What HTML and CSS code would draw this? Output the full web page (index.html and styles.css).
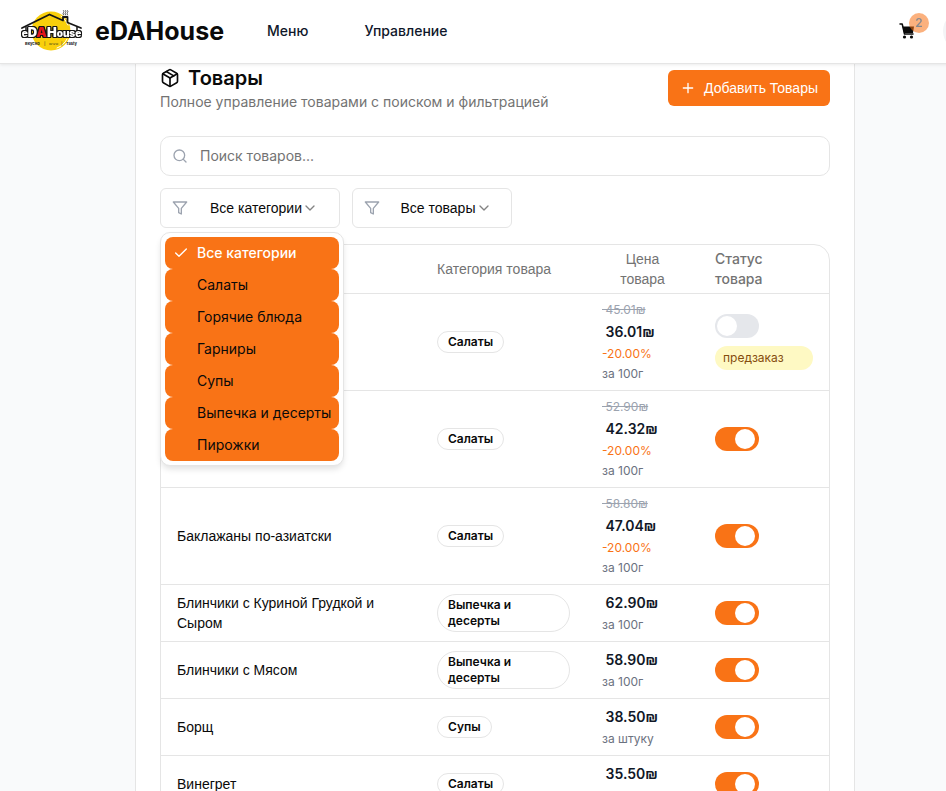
FILE: index.html
```html
<!DOCTYPE html>
<html lang="ru">
<head>
<meta charset="utf-8">
<meta name="viewport" content="width=device-width, initial-scale=1">
<title>eDAHouse</title>
<link rel="stylesheet" href="styles.css">
</head>
<body>
<div class="page">
  <header class="topbar">
    <a class="brand" href="#">
      <svg class="brand-logo" viewBox="0 0 64 44" aria-hidden="true">
        <circle cx="31" cy="22" r="19.500" fill="#f9cf0c"/>
        <path d="M41 7a18 18 0 0 1 7 9M47 30a18 18 0 0 1-10 9" fill="none" stroke="#fff" stroke-width="1"/>
        <path d="M2 19 29.500 5.500 43 11.500V8h4.500v5.500L61 19" fill="none" stroke="#161616" stroke-width="1.800"/>
        <path d="M6 18v3M57 18v3" stroke="#161616" stroke-width="1.500"/>
        <path d="M43.500 6q-1-1.500 0-2.500t0-2M45.500 6q-1-1.500 0-2.500t0-2M47.500 6q-1-1.500 0-2.500t0-2" fill="none" stroke="#333" stroke-width=".8"/>
        <text class="logo-word" text-anchor="middle" x="31.500" y="28" fill="#fff"><tspan class="logo-small">e</tspan>D<tspan fill="#e3151b">A</tspan>H<tspan class="logo-small">ouse</tspan></text>
        <g class="logo-tag" fill="#222">
          <text x="5" y="35.500">Вкусно</text>
          <text x="24" y="35.500" fill="#7c6b18">|</text>
          <text x="29" y="35.500" fill="#7c6b18">טעים</text>
          <text x="41" y="35.500" fill="#7c6b18">|</text>
          <text x="46" y="35.500">Tasty</text>
        </g>
      </svg>
      <span class="brand-name">eDAHouse</span>
    </a>
    <nav class="nav">
      <a href="#">Меню</a>
      <a href="#">Управление</a>
    </nav>
    <div class="account">
      <button class="cart" type="button" aria-label="Корзина">
        <svg viewBox="0 0 16 18" aria-hidden="true">
          <path d="M1 2h2.200l2.300 10H14" fill="none" stroke="#0a0a0a" stroke-width="1.500"/>
          <path d="M3.500 4.500H15l-1 6.500H5z" fill="#0a0a0a"/>
          <circle cx="5.500" cy="15" r="1.600" fill="#0a0a0a"/>
          <circle cx="12.500" cy="15" r="1.600" fill="#0a0a0a"/>
        </svg>
        <span class="cart-count">2</span>
      </button>
      <button class="avatar" type="button" aria-label="Профиль"></button>
    </div>
  </header>

  <main class="panel">
    <div class="panel-head">
      <div>
        <h1>
          <svg class="icon-box" viewBox="0 0 24 24" aria-hidden="true"><path d="M11 21.730a2 2 0 0 0 2 0l7-4A2 2 0 0 0 21 16V8a2 2 0 0 0-1-1.730l-7-4a2 2 0 0 0-2 0l-7 4A2 2 0 0 0 3 8v8a2 2 0 0 0 1 1.730z"/><path d="M12 22V12"/><path d="m3.300 7 8.700 5 8.700-5"/><path d="m7.500 4.270 9 5.150"/></svg>
          Товары
        </h1>
        <p>Полное управление товарами с поиском и фильтрацией</p>
      </div>
      <button class="add" type="button">
        <svg viewBox="0 0 24 24" aria-hidden="true"><path d="M5 12h14M12 5v14"/></svg>
        Добавить Товары
      </button>
    </div>

    <label class="search">
      <svg viewBox="0 0 24 24" aria-hidden="true"><circle cx="11" cy="11" r="8"/><path d="m21 21-4.300-4.300"/></svg>
      <input type="search" placeholder="Поиск товаров..." aria-label="Поиск товаров">
    </label>

    <div class="filters">
      <div class="filter filter-category">
        <svg class="funnel" viewBox="0 0 24 24" aria-hidden="true"><path d="M22 3H2l8 9.460V19l4 2v-8.540z"/></svg>
        <div class="filter-value">
          <select aria-label="Категория">
            <option>Все категории</option>
          </select>
          <svg class="chevron" viewBox="0 0 24 24" aria-hidden="true"><path d="m6 9 6 6 6-6"/></svg>
        </div>
        <ul class="menu" role="listbox" aria-label="Категория">
          <li class="selected" role="option" aria-selected="true">
            <svg viewBox="0 0 24 24" aria-hidden="true"><path d="M20 6 9 17l-5-5"/></svg>
            Все категории
          </li>
          <li role="option">Салаты</li>
          <li role="option">Горячие блюда</li>
          <li role="option">Гарниры</li>
          <li role="option">Супы</li>
          <li role="option">Выпечка и десерты</li>
          <li role="option">Пирожки</li>
        </ul>
      </div>
      <div class="filter filter-status">
        <svg class="funnel" viewBox="0 0 24 24" aria-hidden="true"><path d="M22 3H2l8 9.460V19l4 2v-8.540z"/></svg>
        <div class="filter-value">
          <select aria-label="Статус">
            <option>Все товары</option>
          </select>
          <svg class="chevron" viewBox="0 0 24 24" aria-hidden="true"><path d="m6 9 6 6 6-6"/></svg>
        </div>
      </div>
    </div>

    <div class="table-box">
      <table>
        <colgroup><col><col class="col-category"><col class="col-price"><col class="col-status"></colgroup>
        <thead>
          <tr>
            <th></th>
            <th class="plain">Категория товара</th>
            <th class="plain center">Цена<br>товара</th>
            <th>Статус<br>товара</th>
          </tr>
        </thead>
        <tbody>
          <tr>
            <td></td>
            <td><span class="tag">Салаты</span></td>
            <td><div class="price"><s>&nbsp;45.01₪</s><b>&nbsp;36.01₪</b><em>-20.00%</em><small>за 100г</small></div></td>
            <td><div class="status"><input class="switch" type="checkbox" role="switch" aria-label="В продаже"><span class="preorder">предзаказ</span></div></td>
          </tr>
          <tr>
            <td></td>
            <td><span class="tag">Салаты</span></td>
            <td><div class="price"><s>&nbsp;52.90₪</s><b>&nbsp;42.32₪</b><em>-20.00%</em><small>за 100г</small></div></td>
            <td><div class="status"><input class="switch" type="checkbox" role="switch" aria-label="В продаже" checked></div></td>
          </tr>
          <tr>
            <td>Баклажаны по-азиатски</td>
            <td><span class="tag">Салаты</span></td>
            <td><div class="price"><s>&nbsp;58.80₪</s><b>&nbsp;47.04₪</b><em>-20.00%</em><small>за 100г</small></div></td>
            <td><div class="status"><input class="switch" type="checkbox" role="switch" aria-label="Баклажаны по-азиатски в продаже" checked></div></td>
          </tr>
          <tr>
            <td>Блинчики с Куриной Грудкой и Сыром</td>
            <td><span class="tag">Выпечка и десерты</span></td>
            <td><div class="price"><b>&nbsp;62.90₪</b><small>за 100г</small></div></td>
            <td><div class="status"><input class="switch" type="checkbox" role="switch" aria-label="Блинчики с Куриной Грудкой и Сыром в продаже" checked></div></td>
          </tr>
          <tr>
            <td>Блинчики с Мясом</td>
            <td><span class="tag">Выпечка и десерты</span></td>
            <td><div class="price"><b>&nbsp;58.90₪</b><small>за 100г</small></div></td>
            <td><div class="status"><input class="switch" type="checkbox" role="switch" aria-label="Блинчики с Мясом в продаже" checked></div></td>
          </tr>
          <tr>
            <td>Борщ</td>
            <td><span class="tag">Супы</span></td>
            <td><div class="price"><b>&nbsp;38.50₪</b><small>за штуку</small></div></td>
            <td><div class="status"><input class="switch" type="checkbox" role="switch" aria-label="Борщ в продаже" checked></div></td>
          </tr>
          <tr>
            <td>Винегрет</td>
            <td><span class="tag">Салаты</span></td>
            <td><div class="price price-single"><b>&nbsp;35.50₪</b></div></td>
            <td><div class="status"><input class="switch" type="checkbox" role="switch" aria-label="Винегрет в продаже" checked></div></td>
          </tr>
        </tbody>
      </table>
    </div>
  </main>
</div>
</body>
</html>
```
FILE: styles.css
```css
* { box-sizing: border-box; }

:root {
  --orange: #f97316;
  --line: #e5e5e5;
  --muted: #737373;
  --faint: #9ca3af;
  --ui: Inter, "Liberation Sans", sans-serif;
  --plain: "Liberation Sans", Arial, sans-serif;
}

body {
  margin: 0;
  height: 100vh;
  overflow: hidden;
  background: #f9fafb;
  color: #0a0a0a;
  font: 14px/20px var(--ui);
}

button, input, select { font: inherit; color: inherit; }
svg { flex: none; fill: none; stroke-linecap: round; stroke-linejoin: round; }

/* The layout is a little wider than the window and runs off its right edge. */
.page { margin-right: -44px; }

.topbar {
  position: relative;
  z-index: 2;
  display: flex;
  align-items: center;
  height: 64px;
  padding: 0 7px 2px 20px;
  background: #fff;
  border-bottom: 1px solid var(--line);
  box-shadow: 0 1px 3px rgb(0 0 0 / 8%);
}

.brand { display: flex; align-items: center; gap: 11px; color: inherit; text-decoration: none; }
.brand-logo { width: 64px; height: 44px; }
.brand-name { font-size: 25px; line-height: 32px; font-weight: 700; }
.logo-word {
  font: 900 13px var(--ui);
  filter: drop-shadow(1px 0 0 #161616) drop-shadow(-1px 0 0 #161616) drop-shadow(0 1px 0 #161616) drop-shadow(0 -1px 0 #161616);
}
.logo-small { font-size: 10px; }
.logo-tag { font: 700 4px var(--ui); }

.nav { display: flex; gap: 56px; margin-left: 43px; }
.nav a { color: #0f172a; font-weight: 500; text-decoration: none; }

.account { display: flex; align-items: center; gap: 28px; margin-left: auto; }
.cart { position: relative; padding: 0; border: 0; background: none; }
.cart svg { display: block; width: 16px; height: 18px; }
.cart-count {
  position: absolute;
  top: -9px;
  left: 10px;
  width: 20px;
  height: 20px;
  border-radius: 50%;
  background: var(--orange);
  color: #1f2937;
  font-size: 12px;
  line-height: 20px;
  font-weight: 600;
  text-align: center;
  opacity: .55;
}
.avatar { width: 40px; height: 40px; border: 0; border-radius: 50%; background: #f3f4f6; }

.panel {
  max-width: 720px;
  min-height: 100vh;
  margin: 0 auto;
  padding: 4px 24px 0;
  background: #fff;
  border: solid var(--line);
  border-width: 0 1px;
}

.panel-head { display: flex; justify-content: space-between; align-items: flex-start; }
h1 { display: flex; align-items: center; gap: 8px; margin: 0; font-size: 20px; line-height: 20px; font-weight: 600; }
.icon-box { width: 20px; height: 20px; stroke: #0a0a0a; stroke-width: 2; }
.panel-head p { margin: 4px 0 0; color: var(--muted); }

.add {
  display: flex;
  align-items: center;
  gap: 8px;
  height: 36px;
  margin-top: 2px;
  padding: 0 12px;
  border: 0;
  border-radius: 6px;
  background: var(--orange);
  color: #fff;
  font-family: var(--plain);
}
.add svg { width: 16px; height: 16px; stroke: #fff; stroke-width: 2; }

.search {
  display: flex;
  align-items: center;
  gap: 12px;
  height: 40px;
  margin-top: 24px;
  padding: 0 11px;
  border: 1px solid var(--line);
  border-radius: 10px;
}
.search svg { width: 16px; height: 16px; stroke: var(--faint); stroke-width: 2; }
.search input { flex: 1; min-width: 0; padding: 0; border: 0; outline: 0; background: none; }
.search input::placeholder { color: var(--muted); }

.filters { display: flex; gap: 12px; margin-top: 12px; }
.filter {
  position: relative;
  display: flex;
  align-items: center;
  height: 40px;
  padding: 0 11px;
  border: 1px solid var(--line);
  border-radius: 6px;
}
.filter-category { width: 180px; }
.filter-status { width: 160px; }
.funnel { width: 16px; height: 16px; stroke: var(--faint); stroke-width: 2; }
.filter-value { flex: 1; display: flex; justify-content: center; align-items: center; margin-left: 12px; }
.filter select { padding: 0; border: 0; background: none; appearance: none; font-family: var(--plain); }
.chevron { width: 16px; height: 16px; stroke: #0a0a0a; stroke-width: 2; opacity: .5; }

.menu {
  position: absolute;
  z-index: 1;
  top: 43px;
  left: -1px;
  width: 184px;
  margin: 0;
  padding: 4px;
  list-style: none;
  background: #fff;
  border: 1px solid var(--line);
  border-radius: 10px;
  box-shadow: 0 4px 6px -1px rgb(0 0 0 / 12%);
}
.menu li {
  display: flex;
  align-items: center;
  height: 32px;
  padding: 0 8px 0 32px;
  border-radius: 8px;
  background: var(--orange);
  white-space: nowrap;
}
.menu .selected { gap: 8px; padding-left: 8px; color: #fff; font-weight: 500; }
.menu svg { width: 16px; height: 16px; stroke: #fff; stroke-width: 2; }

.table-box { margin-top: 16px; border: 1px solid var(--line); border-radius: 16px; }
table { width: 100%; table-layout: fixed; border-spacing: 0; }
.col-category { width: 165px; }
.col-price { width: 113px; }
.col-status { width: 130px; }
th { padding: 4px 16px; color: var(--muted); font-weight: 500; text-align: left; }
th, td { border-bottom: 1px solid var(--line); }
.plain { font-family: var(--plain); font-weight: 400; }
.center { text-align: center; }
td { padding: 8px 16px; font-family: var(--plain); vertical-align: middle; }

.tag {
  display: inline-block;
  padding: 2px 10px;
  border: 1px solid var(--line);
  border-radius: 20px;
  font: 600 12px/16px var(--ui);
  vertical-align: middle;
}

.price { display: flex; flex-direction: column; gap: 4px; font: 12px/16px var(--ui); }
.price-single { min-height: 40px; }
.price s { align-self: flex-start; color: var(--faint); }
.price b { color: #111827; font-size: 14px; line-height: 20px; font-weight: 600; }
.price em { color: var(--orange); font-style: normal; }
.price small { color: #6b7280; font-size: 12px; }

.status { display: flex; flex-direction: column; gap: 8px; }
.switch {
  width: 44px;
  height: 24px;
  margin: 0;
  padding: 2px;
  border-radius: 12px;
  background: #e5e7eb;
  appearance: none;
}
.switch::before { content: ""; display: block; width: 20px; height: 20px; border-radius: 50%; background: #fff; }
.switch:checked { padding-left: 20px; background: var(--orange); }
.preorder {
  padding: 4px 8px;
  border-radius: 12px;
  background: #fef9c3;
  color: #854d0e;
  font: 12px/16px var(--ui);
}
```
